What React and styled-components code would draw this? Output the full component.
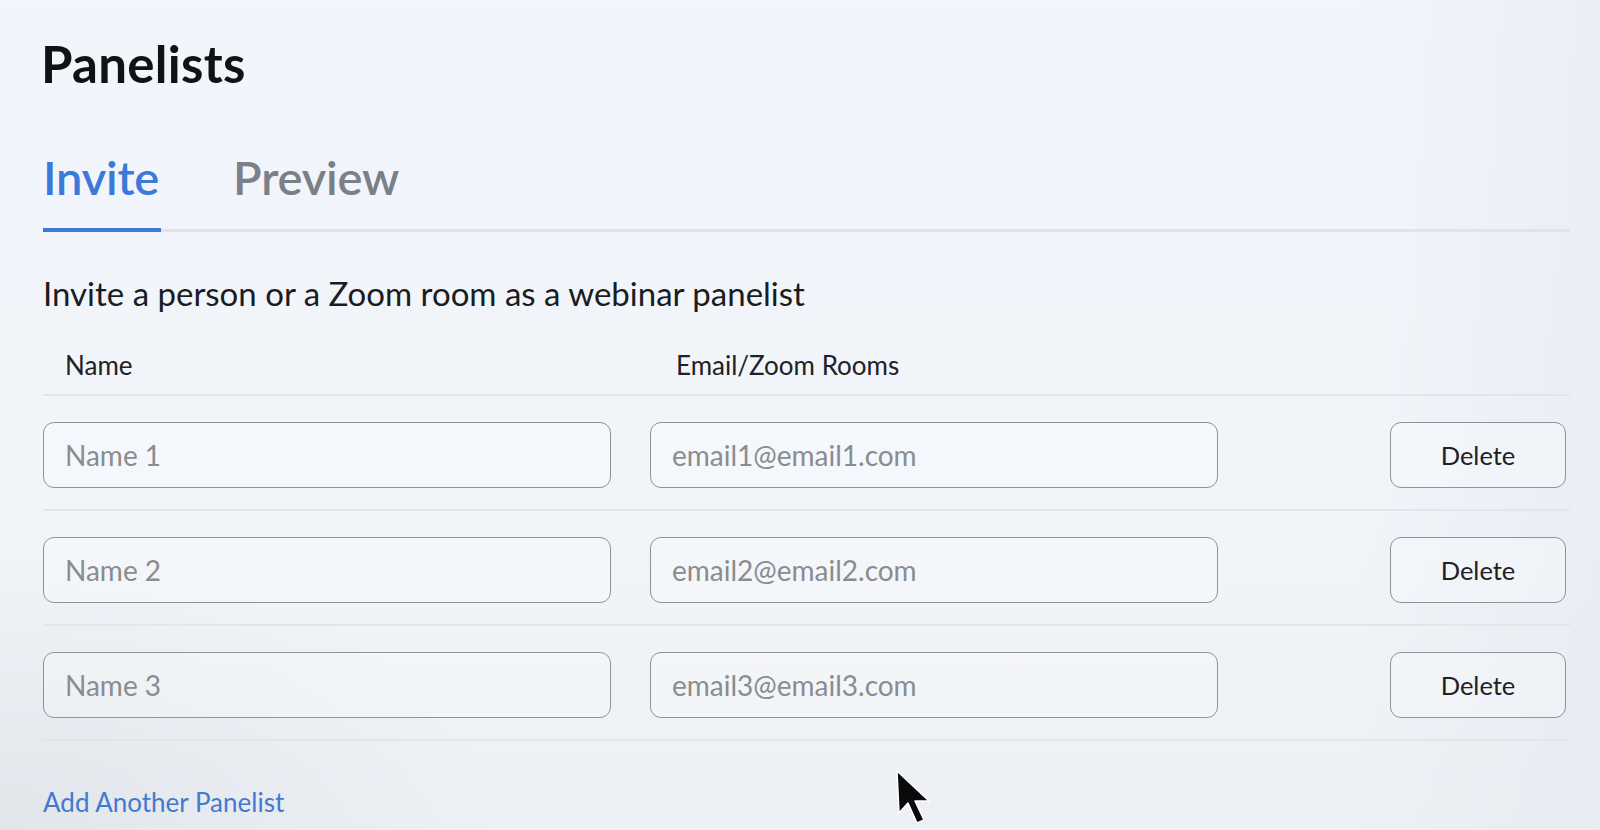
import React from "react";
import styled, { createGlobalStyle } from "styled-components";

const GlobalStyle = createGlobalStyle`
  html, body {
    margin: 0;
    padding: 0;
    background: #f1f5fa;
  }
  body {
    font-family: Lato, "Open Sans", "Liberation Sans", sans-serif;
    -webkit-font-smoothing: antialiased;
  }
  * { box-sizing: border-box; }
`;

const Page = styled.div`
  position: relative;
  width: 1600px;
  height: 830px;
  overflow: hidden;
  padding: 0 30px 0 43px;
  background:
    radial-gradient(ellipse 700px 400px at 0% 100%, rgba(200, 205, 212, 0.3), rgba(200, 205, 212, 0) 70%),
    linear-gradient(90deg, rgba(240, 244, 250, 0) 85%, rgba(228, 232, 240, 0.55) 100%),
    linear-gradient(180deg, #f2f6fc 0%, #f1f5fa 60%, #edf0f4 100%);
`;

const Title = styled.h1`
  margin: 0 0 0 -2px;
  padding-top: 34px;
  font-size: 51px;
  line-height: 60px;
  font-weight: 700;
  color: #111214;
  letter-spacing: 0.3px;
`;

const TabBar = styled.div`
  display: flex;
  gap: 72px;
  margin-top: 54px;
  border-bottom: 3px solid #e0e3e8;
`;

const Tab = styled.div`
  font-size: 47px;
  line-height: 58px;
  font-weight: 600;
  color: ${(p) => (p.$active ? "#3b7ad9" : "#7b7f87")};
  padding: 0 2px 22px 0;
  margin-bottom: -3px;
  border-bottom: 4px solid ${(p) => (p.$active ? "#3b7ad9" : "transparent")};
  letter-spacing: -0.2px;
`;

const Subtitle = styled.p`
  margin: 42px 0 0;
  font-size: 33px;
  line-height: 38px;
  font-weight: 400;
  color: #1b1c1e;
  letter-spacing: 0;
`;

const Grid = styled.div`
  display: grid;
  grid-template-columns: 568px 568px 1fr 176px;
  column-gap: 39px;
  align-items: center;
  border-bottom: 2px solid #e2e5ea;
  padding: ${(p) => (p.$header ? "39px 4px 14px 0" : "26px 4px 21px 0")};
`;

const HeaderCell = styled.div`
  font-size: 26px;
  line-height: 29px;
  color: #202124;
  padding-left: ${(p) => p.$indent}px;
`;

const TextInput = styled.input`
  height: 66px;
  width: 100%;
  border: 1.5px solid #8f9297;
  border-radius: 11px;
  background: rgba(255, 255, 255, 0.25);
  padding: 0 0 0 21px;
  font-family: inherit;
  font-size: 28px;
  color: #333;
  outline: none;
  &::placeholder {
    color: #8a8c90;
    opacity: 1;
  }
`;

const DeleteButton = styled.button`
  grid-column: 4;
  height: 66px;
  width: 176px;
  border: 1.5px solid #8f9297;
  border-radius: 11px;
  background: rgba(255, 255, 255, 0.25);
  font-family: inherit;
  font-size: 25.5px;
  color: #202124;
  cursor: pointer;
`;

const AddLink = styled.a`
  display: inline-block;
  margin-top: 47px;
  font-size: 26px;
  line-height: 29px;
  color: #4479d0;
  text-decoration: none;
  letter-spacing: 0;
`;

const Cursor = styled.svg`
  position: absolute;
  left: 893px;
  top: 768px;
  width: 42px;
  height: 60px;
  pointer-events: none;
`;

const rows = [
  { name: "Name 1", email: "email1@email1.com" },
  { name: "Name 2", email: "email2@email2.com" },
  { name: "Name 3", email: "email3@email3.com" },
];

export default function App() {
  return (
    <>
      <GlobalStyle />
      <Page>
        <Title>Panelists</Title>
        <TabBar>
          <Tab $active>Invite</Tab>
          <Tab>Preview</Tab>
        </TabBar>
        <Subtitle>Invite a person or a Zoom room as a webinar panelist</Subtitle>
        <Grid $header>
          <HeaderCell $indent={22}>Name</HeaderCell>
          <HeaderCell $indent={26}>Email/Zoom Rooms</HeaderCell>
        </Grid>
        {rows.map((r) => (
          <Grid key={r.name}>
            <TextInput placeholder={r.name} />
            <TextInput placeholder={r.email} />
            <DeleteButton>Delete</DeleteButton>
          </Grid>
        ))}
        <AddLink href="#">Add Another Panelist</AddLink>
        <Cursor viewBox="0 0 42 60">
          <path
            d="M4 3 L6 45 L15 35 L24 55 L31 52 L22 33 L36 33 Z"
            fill="#0a0a0a"
            stroke="#ffffff"
            strokeWidth="1.5"
            strokeLinejoin="round"
          />
        </Cursor>
      </Page>
    </>
  );
}
